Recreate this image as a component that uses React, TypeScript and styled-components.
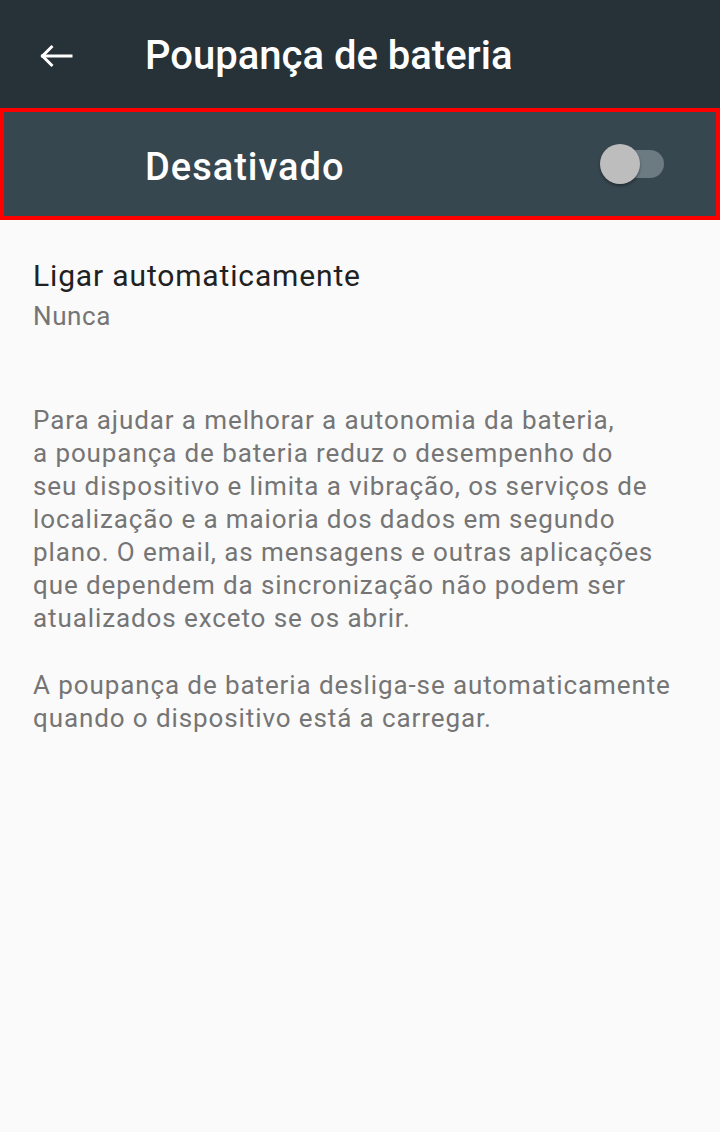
import React from "react";
import styled, { createGlobalStyle } from "styled-components";

const Global = createGlobalStyle`
  html, body { margin: 0; padding: 0; background: #fafafa; }
  body { font-family: Roboto, "Noto Sans", sans-serif; -webkit-font-smoothing: antialiased; }
  * { box-sizing: border-box; }
`;

const Screen = styled.div`
  width: 720px;
  height: 1132px;
  background: #fafafa;
  display: flex;
  flex-direction: column;
`;

const Toolbar = styled.header`
  height: 108px;
  background: #263238;
  display: flex;
  align-items: center;
  padding-left: 39px;
`;

const BackButton = styled.div`
  width: 34px;
  height: 24px;
  display: flex;
  align-items: center;
  margin-right: 72px;
  margin-top: 3px;
`;

const Title = styled.h1`
  margin: 0;
  margin-top: 3px;
  color: #ffffff;
  font-size: 40px;
  font-weight: 500;
  letter-spacing: 0;
  line-height: 48px;
`;

const SwitchBar = styled.div`
  height: 112px;
  background: #37474f;
  border: 4px solid #ff0000;
  display: flex;
  align-items: center;
  justify-content: space-between;
  padding-left: 141px;
  padding-right: 50px;
`;

const SwitchLabel = styled.span`
  color: #ffffff;
  font-size: 38px;
  font-weight: 500;
  letter-spacing: 1px;
  margin-top: 6px;
`;

const Switch = styled.div`
  position: relative;
  width: 66px;
  height: 40px;
  display: flex;
  align-items: center;
`;

const Track = styled.div`
  width: 62px;
  height: 28px;
  margin-left: 2px;
  border-radius: 14px;
  background: #6c7a82;
`;

const Thumb = styled.div`
  position: absolute;
  left: 0;
  top: 0;
  width: 40px;
  height: 40px;
  border-radius: 50%;
  background: #bdbdbd;
  box-shadow: 0 2px 3px rgba(0, 0, 0, 0.35);
`;

const Preference = styled.div`
  padding: 37px 33px 0 33px;
  display: flex;
  flex-direction: column;
`;

const PrefTitle = styled.div`
  font-size: 30px;
  letter-spacing: 0.85px;
  color: #212121;
  line-height: 38px;
`;

const PrefSummary = styled.div`
  font-size: 26px;
  letter-spacing: 0.6px;
  color: #757575;
  line-height: 34px;
  margin-top: 4px;
`;

const Footer = styled.div`
  padding: 71px 33px 0 33px;
  display: flex;
  flex-direction: column;
  gap: 34px;
`;

const Paragraph = styled.p`
  margin: 0;
  font-size: 26px;
  letter-spacing: 0.9px;
  line-height: 33px;
  color: #757575;
  white-space: nowrap;
`;

const ArrowIcon = () => (
  <svg width="34" height="24" viewBox="0 0 34 24" fill="none" stroke="#ffffff" strokeWidth="3" strokeLinecap="square">
    <path d="M3.5 12H32" />
    <path d="M13.5 2L3.5 12l10 10" strokeLinecap="butt" />
  </svg>
);

export default function App() {
  return (
    <>
      <Global />
      <Screen>
        <Toolbar>
          <BackButton>
            <ArrowIcon />
          </BackButton>
          <Title>Poupança de bateria</Title>
        </Toolbar>
        <SwitchBar>
          <SwitchLabel>Desativado</SwitchLabel>
          <Switch>
            <Track />
            <Thumb />
          </Switch>
        </SwitchBar>
        <Preference>
          <PrefTitle>Ligar automaticamente</PrefTitle>
          <PrefSummary>Nunca</PrefSummary>
        </Preference>
        <Footer>
          <Paragraph>
            Para ajudar a melhorar a autonomia da bateria,
            <br />a poupança de bateria reduz o desempenho do
            <br />seu dispositivo e limita a vibração, os serviços de
            <br />localização e a maioria dos dados em segundo
            <br />plano. O email, as mensagens e outras aplicações
            <br />que dependem da sincronização não podem ser
            <br />atualizados exceto se os abrir.
          </Paragraph>
          <Paragraph>
            A poupança de bateria desliga-se automaticamente
            <br />quando o dispositivo está a carregar.
          </Paragraph>
        </Footer>
      </Screen>
    </>
  );
}
